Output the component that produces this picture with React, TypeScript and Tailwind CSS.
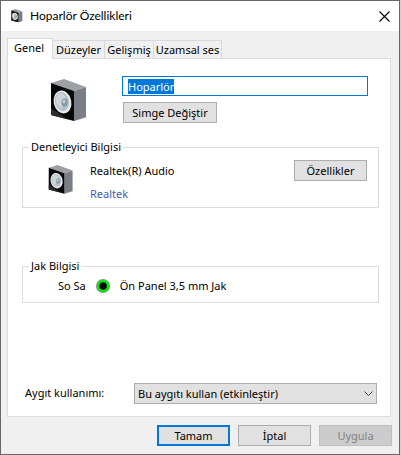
import { useEffect, useRef, useState } from "react";
import type { ReactNode } from "react";

const TABS = [
  { label: "Genel", width: "w-[46px]" },
  { label: "Düzeyler", width: "w-[52px]" },
  { label: "Gelişmiş", width: "w-[49px]" },
  { label: "Uzamsal ses", width: "w-[68px]" },
];

function SpeakerIcon({ className }: { className: string }) {
  return (
    <svg className={className} viewBox="0 0 38 44" aria-hidden="true">
      <path d="M24 42l14-3-10-4z" fill="#dcdcdc" />
      <path d="M1 4L14 0l22 8-12 4z" fill="#9da0a5" />
      <path d="M24 12l12-4v30l-12 4z" fill="#7b7e86" />
      <path d="M1 4l23 8v30L1 36z" fill="#080808" />
      <path d="M1 36V29l17 11.500z" fill="#2b2b2b" />
      <ellipse cx="12.500" cy="23" rx="8.800" ry="11.500" transform="rotate(-12 12.500 23)" fill="#e9ecee" />
      <ellipse cx="12" cy="22.500" rx="7" ry="9.500" transform="rotate(-12 12 22.500)" fill="#b3bec4" />
      <path d="M6 19c1-6 6-6 10-1l-3 3-1 9c-5-2-7-7-6-11z" fill="#cdd5d9" />
      <ellipse cx="14.500" cy="23.500" rx="3" ry="4" fill="#8599a3" />
      <ellipse cx="14" cy="22.500" rx="1.500" ry="2" fill="#c0cdd3" />
    </svg>
  );
}

function PushButton({ children, className = "" }: { children: ReactNode; className?: string }) {
  return (
    <button
      type="button"
      className={`h-[21px] shrink-0 border border-[#adadad] bg-[#e1e1e1] leading-[19px] ${className}`}
    >
      {children}
    </button>
  );
}

function Group({ title, children, className = "" }: { title: string; children: ReactNode; className?: string }) {
  return (
    <fieldset className={`mr-[11px] ml-[14px] border border-[#dcdcdc] ${className}`}>
      <legend className="ml-[6px] px-[2px] leading-[14px]">{title}</legend>
      {children}
    </fieldset>
  );
}

export default function App() {
  const [tab, setTab] = useState("Genel");
  const [name, setName] = useState("Hoparlör");
  const nameRef = useRef<HTMLInputElement>(null);

  useEffect(() => {
    nameRef.current?.focus();
    nameRef.current?.select();
  }, []);

  return (
    <div className="border-r border-[#d0d0d0] font-['Noto_Sans','Open_Sans',sans-serif] text-[11px] text-black">
      <main className="border border-[#68686a] bg-[#f0f0f0]">
        <header className="flex h-[30px] items-center bg-white pr-[9px] pl-[10px]">
          <SpeakerIcon className="h-[14px] w-[12px]" />
          <h1 className="ml-[7px] font-['Lato','Noto_Sans',sans-serif] text-[12px]">Hoparlör Özellikleri</h1>
          <button type="button" aria-label="Kapat" className="ml-auto flex size-[12px] items-center justify-center">
            <svg width="11" height="11" viewBox="0 0 11 11" fill="none" stroke="#000" strokeWidth="1.1">
              <path d="M.5.5l10 10M10.500.5l-10 10" />
            </svg>
          </button>
        </header>

        <div className="pt-[7px] pr-[8px] pl-[6px]">
          <div role="tablist" className="flex items-end">
            {TABS.map(({ label, width }) => (
              <button
                key={label}
                type="button"
                role="tab"
                aria-selected={tab === label}
                onClick={() => setTab(label)}
                className={`whitespace-nowrap ${width} ${
                  tab === label
                    ? "relative -mb-px h-[21px] border border-b-0 border-[#d9d9d9] bg-white pr-[2px] pb-[3px] leading-[16px]"
                    : "h-[18px] border-t border-r border-[#d9d9d9] leading-[17px]"
                }`}
              >
                {label}
              </button>
            ))}
          </div>

          <section className="border border-[#dcdcdc] bg-white pt-[17px] pb-[12px]">
            <div className="flex pr-[22px] pl-[42px]">
              <SpeakerIcon className="mt-[3px] h-[44px] w-[38px] shrink-0" />
              <div className="ml-[34px] min-w-0 flex-1">
                <input
                  ref={nameRef}
                  aria-label="Aygıt adı"
                  value={name}
                  onChange={(e) => setName(e.target.value)}
                  className="block h-[20px] w-full border border-[#0078d7] bg-white px-[5px] leading-[14px] outline-none selection:bg-[#0078d7] selection:text-white"
                />
                <PushButton className="mt-[6px] ml-px w-[94px]">Simge Değiştir</PushButton>
              </div>
            </div>

            <Group title="Denetleyici Bilgisi" className="mt-[17px]">
              <div className="flex h-[53px] items-start pt-[6px] pr-[11px] pl-[25px]">
                <SpeakerIcon className="mt-[5px] h-[30px] w-[26px] shrink-0" />
                <div className="ml-[16px] flex flex-1 flex-col gap-[7px] pt-[3px] leading-[16px]">
                  <span>Realtek(R) Audio</span>
                  <a href="#realtek" className="self-start text-[#4562a8]">
                    Realtek
                  </a>
                </div>
                <PushButton className="w-[73px]">Özellikler</PushButton>
              </div>
            </Group>

            <Group title="Jak Bilgisi" className="mt-[51px]">
              <div className="flex h-[29px] items-start pt-[5px] pl-[35px] leading-[16px]">
                <span>So Sa</span>
                <svg className="mt-[1px] ml-[10px] size-[14px]" viewBox="0 0 14 14" aria-hidden="true">
                  <circle cx="7" cy="7" r="7" fill="#7c8f7c" />
                  <circle cx="7" cy="7" r="6.200" fill="#08ee08" />
                  <circle cx="7" cy="7" r="3.800" fill="#000" />
                </svg>
                <span className="ml-[10px]">Ön Panel 3,5 mm Jak</span>
              </div>
            </Group>

            <div className="mt-[80px] flex items-center pr-[13px] pl-[17px]">
              <label htmlFor="usage" className="w-[109px] shrink-0">
                Aygıt kullanımı:
              </label>
              <div className="relative min-w-0 flex-1">
                <select
                  id="usage"
                  className="block h-[21px] w-full appearance-none border border-[#adadad] bg-[#e1e1e1] px-[3px] leading-[19px] outline-none"
                >
                  <option>Bu aygıtı kullan (etkinleştir)</option>
                  <option>Bu aygıtı kullanma (devre dışı bırak)</option>
                </select>
                <svg
                  className="pointer-events-none absolute top-[8px] right-[4px]"
                  width="9"
                  height="6"
                  viewBox="0 0 9 6"
                  fill="none"
                  stroke="#444"
                >
                  <path d="M.5.5l4 4 4-4" />
                </svg>
              </div>
            </div>
          </section>
        </div>

        <footer className="flex justify-end gap-[8px] pt-[8px] pr-[7px] pb-[8px]">
          <button type="button" className="h-[21px] w-[73px] border-2 border-[#0078d7] bg-[#e1e1e1] leading-[17px]">
            Tamam
          </button>
          <PushButton className="w-[73px]">İptal</PushButton>
          <button
            type="button"
            disabled
            className="h-[21px] w-[73px] border border-[#bfbfbf] bg-[#cccccc] leading-[19px] text-[#838383]"
          >
            Uygula
          </button>
        </footer>
      </main>
    </div>
  );
}
